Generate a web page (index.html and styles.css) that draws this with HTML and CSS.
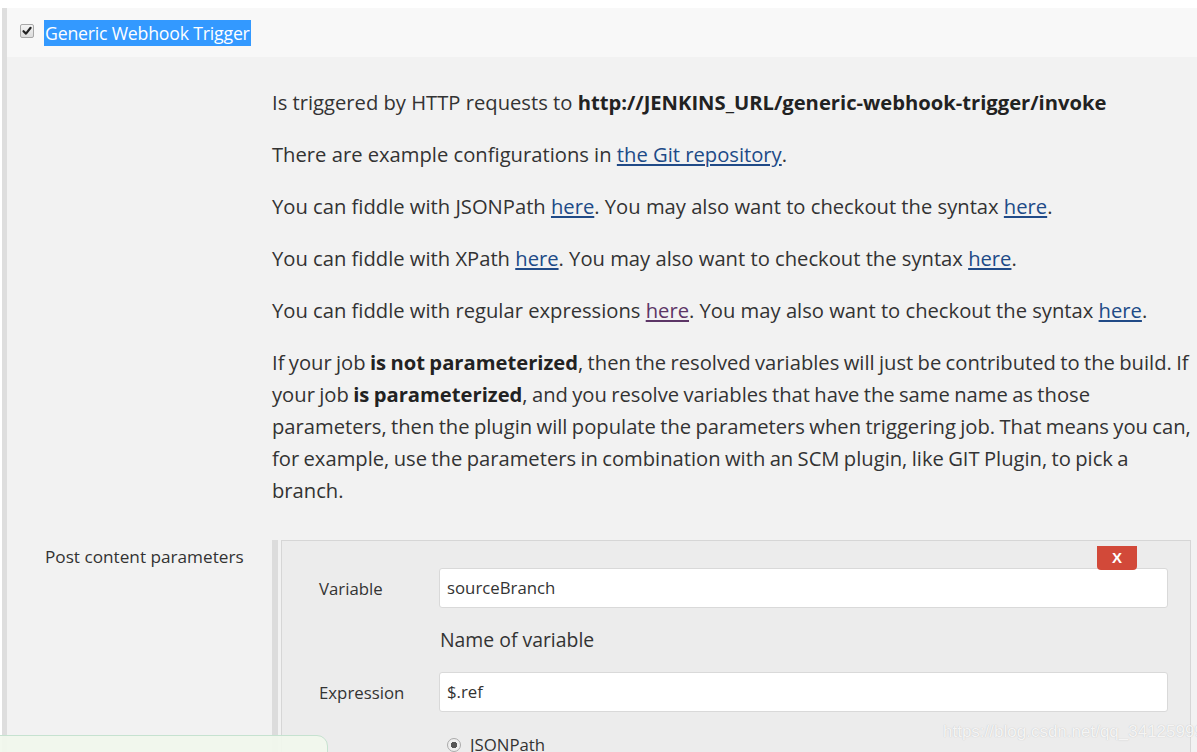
FILE: index.html
```html
<!DOCTYPE html>
<html>
<head>
<meta charset="utf-8">
<link rel="stylesheet" href="styles.css">
</head>
<body>
<div class="page">
  <div class="section">
    <div class="header">
      <span class="checkbox">
        <svg width="12" height="12" viewBox="0 0 12 12"><path d="M2.5 6.2 L5 8.6 L9.6 2.8" fill="none" stroke="#222" stroke-width="2.2" stroke-linecap="round" stroke-linejoin="round"/></svg>
      </span>
      <span class="title">Generic Webhook Trigger</span>
    </div>
    <div class="help">
      <p>Is triggered by HTTP requests to <b>http://JENKINS_URL/generic-webhook-trigger/invoke</b></p>
      <p>There are example configurations in <a href="#">the Git repository</a>.</p>
      <p>You can fiddle with JSONPath <a href="#">here</a>. You may also want to checkout the syntax <a href="#">here</a>.</p>
      <p>You can fiddle with XPath <a href="#">here</a>. You may also want to checkout the syntax <a href="#">here</a>.</p>
      <p>You can fiddle with regular expressions <a href="#" class="visited">here</a>. You may also want to checkout the syntax <a href="#">here</a>.</p>
      <p class="long">If your job <b>is not parameterized</b>, then the resolved variables will just be contributed to the build. If<br>your job <b>is parameterized</b>, and you resolve variables that have the same name as those<br>parameters, then the plugin will populate the parameters when triggering job. That means you can,<br>for example, use the parameters in combination with an SCM plugin, like GIT Plugin, to pick a<br>branch.</p>
    </div>
    <div class="row">
      <div class="row-label">Post content parameters</div>
      <div class="repeat">
        <div class="chunk">
          <button class="del">X</button>
          <div class="field">
            <div class="flabel">Variable</div>
            <div class="input">sourceBranch</div>
          </div>
          <div class="desc">Name of variable</div>
          <div class="field">
            <div class="flabel">Expression</div>
            <div class="input">$.ref</div>
          </div>
          <div class="radio-row">
            <span class="radio"></span>
            <span>JSONPath</span>
          </div>
        </div>
      </div>
    </div>
  </div>
  <div class="toast"></div>
  <div class="watermark">https://blog.csdn.net/qq_34125999</div>
</div>
</body>
</html>
```

FILE: styles.css
```css
html, body {
  margin: 0;
  padding: 0;
  background: #ffffff;
  height: 752px;
  overflow: hidden;
}
.page {
  position: relative;
  padding-top: 8px;
  font-family: "Open Sans", "Noto Sans", sans-serif;
  color: #333;
  height: 744px;
  overflow: hidden;
}
.section {
  margin-left: 2px;
  border-left: 5px solid #dedede;
  background: #f2f2f2;
  height: 744px;
}
.header {
  height: 49px;
  background: #f8f8f8;
  display: flex;
  align-items: center;
  padding-left: 13px;
}
.checkbox {
  width: 12px;
  height: 12px;
  border: 1px solid #a8a8a8;
  border-radius: 2px;
  background: linear-gradient(#f4f4f4, #dcdcdc);
  display: flex;
  align-items: center;
  justify-content: center;
  margin-top: -4px;
}
.title {
  margin-left: 10px;
  background: #3399ff;
  color: #fff;
  font-size: 17.7px;
  line-height: 26px;
  padding: 0 1px;
  letter-spacing: -0.2px;
}
.help {
  padding: 29px 0 0 265px;
  font-size: 20.2px;
  line-height: 32px;
}
.help p {
  margin: 0 0 20px 0;
}
.help p.long {
  white-space: nowrap;
  word-spacing: -0.9px;
}
.help b {
  color: #222;
}
.help a {
  color: #204a87;
  text-decoration: underline;
}
.help a.visited {
  color: #5c3566;
}
.row {
  display: flex;
  margin-top: 34px;
}
.row-label {
  width: 227px;
  padding-left: 38px;
  padding-top: 6px;
  font-size: 17.2px;
  line-height: 22px;
}
.repeat {
  flex: 1;
  border-left: 6px solid #dcdcdc;
  padding-left: 3px;
  margin-right: 6px;
}
.chunk {
  position: relative;
  background: #ececec;
  border: 1px solid #d6d6d6;
  padding: 27px 22px 0 37px;
  min-height: 260px;
  font-size: 16.8px;
}
.del {
  position: absolute;
  top: 5px;
  right: 53px;
  width: 40px;
  height: 24px;
  border: none;
  border-radius: 0 0 4px 4px;
  background: #d24939;
  color: #fff;
  font-family: "Liberation Sans", Arial, sans-serif;
  font-weight: bold;
  font-size: 15px;
  padding: 0;
  line-height: 24px;
}
.field {
  display: flex;
  align-items: center;
}
.flabel {
  width: 120px;
}
.input {
  flex: 1;
  height: 38px;
  line-height: 38px;
  background: #fff;
  border: 1px solid #d9d9d9;
  border-radius: 3px;
  padding-left: 7px;
}
.desc {
  padding-left: 121px;
  font-size: 19.4px;
  line-height: 24px;
  margin: 20px 0 20px;
}
.radio-row {
  display: flex;
  align-items: center;
  padding-left: 128px;
  margin-top: 21px;
  gap: 9px;
}
.radio {
  width: 12px;
  height: 12px;
  border-radius: 50%;
  border: 1px solid #aaa;
  background: radial-gradient(circle, #555 0 3px, #eee 3.5px);
}
.toast {
  position: absolute;
  left: -1px;
  top: 735px;
  width: 327px;
  height: 40px;
  border: 1px solid #c6e2d0;
  border-radius: 0 11px 0 0;
  background: rgba(241, 247, 237, 0.93);
}
.watermark {
  position: absolute;
  left: 943px;
  top: 722px;
  font-family: "Liberation Sans", Arial, sans-serif;
  font-size: 17px;
  color: rgba(255, 255, 255, 0.85);
  text-shadow: 0 0 1px rgba(150, 150, 150, 0.6);
}
```
